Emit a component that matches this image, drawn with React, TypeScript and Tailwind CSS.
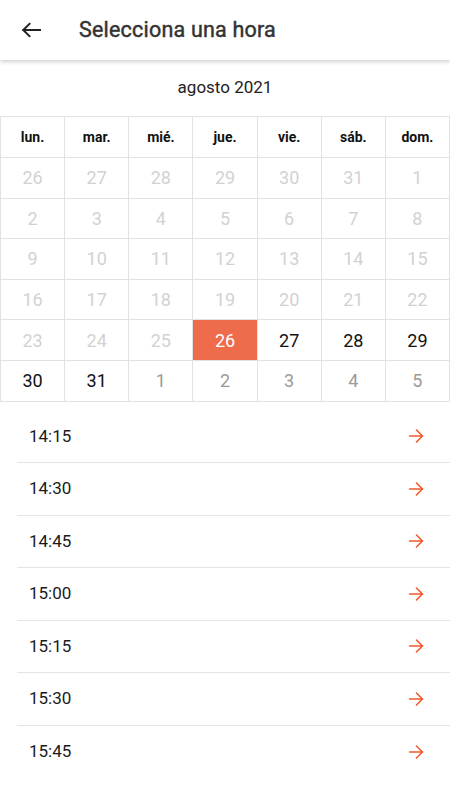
import React from 'react';

type Day = { n: number; kind: 'past' | 'active' | 'next' | 'selected' };

const weekDays = ['lun.', 'mar.', 'mié.', 'jue.', 'vie.', 'sáb.', 'dom.'];

const buildDays = (): Day[] => {
  const days: Day[] = [];
  for (let n = 26; n <= 31; n++) days.push({ n, kind: 'past' });
  for (let n = 1; n <= 25; n++) days.push({ n, kind: 'past' });
  days.push({ n: 26, kind: 'selected' });
  for (let n = 27; n <= 31; n++) days.push({ n, kind: 'active' });
  for (let n = 1; n <= 5; n++) days.push({ n, kind: 'next' });
  return days;
};

const times = ['14:15', '14:30', '14:45', '15:00', '15:15', '15:30', '15:45'];

const dayClass: Record<Day['kind'], string> = {
  past: 'text-[#d2d2d2]',
  active: 'text-[#111111]',
  next: 'text-[#9a9a9a]',
  selected: 'bg-[#ee6b4b] text-white',
};

export default function App() {
  const days = buildDays();

  return (
    <div className="w-[450px] h-[800px] bg-white overflow-hidden" style={{ fontFamily: 'Roboto, "Noto Sans", sans-serif' }}>
      {/* App bar */}
      <header className="relative z-10 h-[60px] flex items-center bg-white shadow-[0_2px_4px_rgba(0,0,0,0.18)]">
        <button className="w-[60px] h-full flex items-center justify-center pl-[1px]" aria-label="Volver">
          <svg width="20" height="16" viewBox="0 0 20 16" fill="none" stroke="#222222" strokeWidth="2" strokeLinecap="square">
            <path d="M19 8H2.5" />
            <path d="M8.5 1.8L2.3 8L8.5 14.2" />
          </svg>
        </button>
        <h1 className="ml-[19px] text-[21.5px] font-normal text-[#333333] tracking-[0.2px] [-webkit-text-stroke:0.45px_#333333]">
          Selecciona una hora
        </h1>
      </header>

      {/* Month */}
      <div className="h-[56px] flex items-center justify-center text-[17px] text-[#222222]">agosto 2021</div>

      {/* Calendar grid */}
      <div className="grid grid-cols-7 border-t border-l border-[#e2e2e2]">
        {weekDays.map((d) => (
          <div
            key={d}
            className="h-[41px] flex items-center justify-center border-r border-b border-[#e2e2e2] text-[14px] font-bold text-[#111111]"
          >
            {d}
          </div>
        ))}
        {days.map((d, i) => (
          <div
            key={i}
            className={`h-[40.6px] flex items-center justify-center border-r border-b border-[#e2e2e2] text-[18px] ${dayClass[d.kind]}`}
          >
            {d.n}
          </div>
        ))}
      </div>

      {/* Time slots */}
      <ul className="pt-[9px] pl-[17px]">
        {times.map((t, i) => (
          <li
            key={t}
            className={`h-[52.5px] flex items-center justify-between pl-[12px] pr-[23px] ${i < times.length - 1 ? 'border-b border-[#e4e4e4]' : ''}`}
          >
            <span className="text-[17px] text-[#1a1a1a]">{t}</span>
            <svg width="22" height="22" viewBox="0 0 24 24" fill="none" stroke="#f0582c" strokeWidth="1.7" strokeLinecap="round" strokeLinejoin="round">
              <path d="M5 12h14" />
              <path d="M12.5 5.5L19 12l-6.5 6.5" />
            </svg>
          </li>
        ))}
      </ul>
    </div>
  );
}
